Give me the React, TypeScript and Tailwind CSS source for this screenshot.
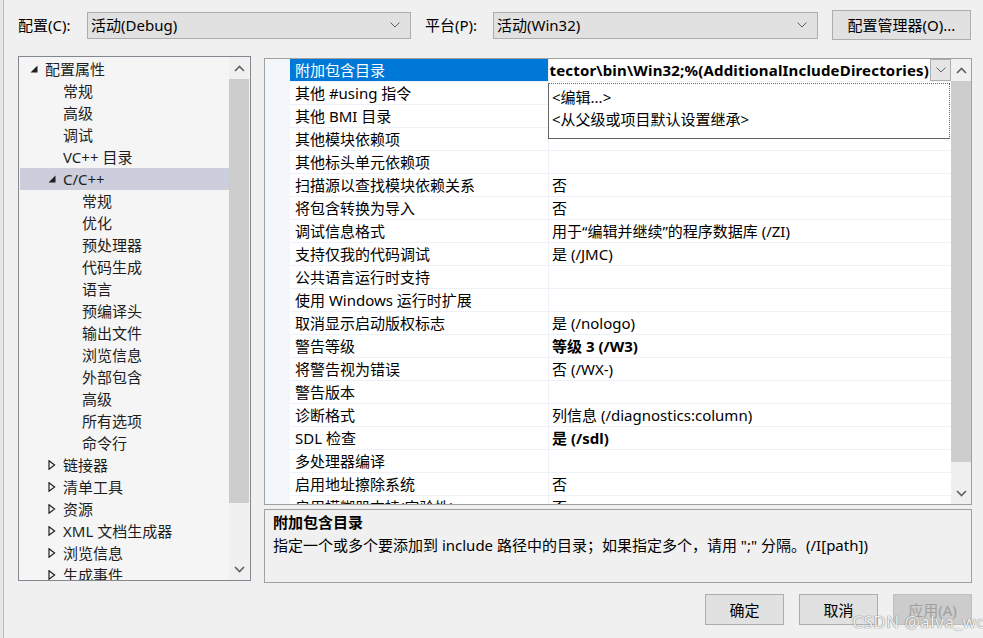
import React from 'react';

type TreeItem = { label: string; level: 0 | 1 | 2; expander?: 'open' | 'closed'; selected?: boolean };

const treeItems: TreeItem[] = [
  { label: '配置属性', level: 0, expander: 'open' },
  { label: '常规', level: 1 },
  { label: '高级', level: 1 },
  { label: '调试', level: 1 },
  { label: 'VC++ 目录', level: 1 },
  { label: 'C/C++', level: 1, expander: 'open', selected: true },
  { label: '常规', level: 2 },
  { label: '优化', level: 2 },
  { label: '预处理器', level: 2 },
  { label: '代码生成', level: 2 },
  { label: '语言', level: 2 },
  { label: '预编译头', level: 2 },
  { label: '输出文件', level: 2 },
  { label: '浏览信息', level: 2 },
  { label: '外部包含', level: 2 },
  { label: '高级', level: 2 },
  { label: '所有选项', level: 2 },
  { label: '命令行', level: 2 },
  { label: '链接器', level: 1, expander: 'closed' },
  { label: '清单工具', level: 1, expander: 'closed' },
  { label: '资源', level: 1, expander: 'closed' },
  { label: 'XML 文档生成器', level: 1, expander: 'closed' },
  { label: '浏览信息', level: 1, expander: 'closed' },
  { label: '生成事件', level: 1, expander: 'closed' },
];

type Prop = { name: string; value?: string; bold?: boolean };

const props: Prop[] = [
  { name: '附加包含目录' },
  { name: '其他 #using 指令' },
  { name: '其他 BMI 目录' },
  { name: '其他模块依赖项' },
  { name: '其他标头单元依赖项' },
  { name: '扫描源以查找模块依赖关系', value: '否' },
  { name: '将包含转换为导入', value: '否' },
  { name: '调试信息格式', value: '用于“编辑并继续”的程序数据库 (/ZI)' },
  { name: '支持仅我的代码调试', value: '是 (/JMC)' },
  { name: '公共语言运行时支持' },
  { name: '使用 Windows 运行时扩展' },
  { name: '取消显示启动版权标志', value: '是 (/nologo)' },
  { name: '警告等级', value: '等级 3 (/W3)', bold: true },
  { name: '将警告视为错误', value: '否 (/WX-)' },
  { name: '警告版本' },
  { name: '诊断格式', value: '列信息 (/diagnostics:column)' },
  { name: 'SDL 检查', value: '是 (/sdl)', bold: true },
  { name: '多处理器编译' },
  { name: '启用地址擦除系统', value: '否' },
  { name: '启用模糊器支持(实验性)', value: '否' },
];

const levelPad = { 0: 'pl-[10px]', 1: 'pl-[28px]', 2: 'pl-[47px]' };

function ChevronDown({ className = '' }: { className?: string }) {
  return (
    <svg width="10" height="6" viewBox="0 0 10 6" className={className}>
      <polyline points="0.5,0.5 5,5 9.5,0.5" fill="none" stroke="#606060" strokeWidth="1" />
    </svg>
  );
}

function ScrollArrow({ dir }: { dir: 'up' | 'down' }) {
  return (
    <svg width="11" height="7" viewBox="0 0 11 7">
      <polyline
        points={dir === 'up' ? '1,6 5.5,1.5 10,6' : '1,1 5.5,5.5 10,1'}
        fill="none"
        stroke="#606060"
        strokeWidth="1.6"
      />
    </svg>
  );
}

function Expander({ kind }: { kind?: 'open' | 'closed' }) {
  return (
    <span className="flex w-[15px] shrink-0 items-center">
      {kind === 'open' && (
        <svg width="8" height="8" viewBox="0 0 8 8">
          <polygon points="7.5,0.5 7.5,7.5 0.5,7.5" fill="#1e1e1e" />
        </svg>
      )}
      {kind === 'closed' && (
        <svg width="8" height="10" viewBox="0 0 8 10">
          <polygon points="1,0.8 6.6,5 1,9.2" fill="none" stroke="#1e1e1e" strokeWidth="1.2" />
        </svg>
      )}
    </span>
  );
}

function Combo({ text, className }: { text: string; className: string }) {
  return (
    <div className={`flex h-[27px] items-center justify-between border border-[#adadad] bg-[#e1e1e1] pl-[3px] pr-[10px] ${className}`}>
      <span>{text}</span>
      <ChevronDown />
    </div>
  );
}

function Button({ text, disabled }: { text: string; disabled?: boolean }) {
  return (
    <div
      className={`flex h-[31px] w-[79px] items-center justify-center border ${
        disabled ? 'border-[#bfbfbf] bg-[#cccccc] text-[#a0a0a0]' : 'border-[#adadad] bg-[#e1e1e1] text-black'
      }`}
    >
      {text}
    </div>
  );
}

export default function App() {
  return (
    <div
      className="relative flex h-[638px] w-[983px] overflow-hidden bg-[#f0f0f0] text-[15px] leading-[20px] text-black"
      style={{ fontFamily: '"Segoe UI", "Noto Sans", "Noto Sans CJK SC", sans-serif' }}
    >
      <div className="h-full w-[4px] shrink-0 border-r border-[#b9b9b9] bg-[#e6e6e6]" />

      <div className="flex flex-1 flex-col pl-[14px] pr-[11px]">
        {/* top selectors */}
        <div className="mt-[10px] flex h-[30px] items-center">
          <span className="w-[69px]">配置(C):</span>
          <Combo text="活动(Debug)" className="w-[324px]" />
          <span className="ml-[14px] w-[68px]">平台(P):</span>
          <Combo text="活动(Win32)" className="w-[325px]" />
          <div className="ml-[14px] flex h-[30px] w-[139px] items-center justify-center border border-[#adadad] bg-[#e1e1e1]">
            配置管理器(O)...
          </div>
        </div>

        <div className="mt-[16px] flex">
          {/* tree */}
          <div className="flex h-[525px] w-[233px] border border-[#828790] bg-[#f5f5f5]">
            <div className="flex-1 overflow-hidden pl-px pt-px">
              {treeItems.map((it, i) => (
                <div
                  key={i}
                  className={`flex h-[22px] items-center whitespace-nowrap ${levelPad[it.level]} ${
                    it.selected ? 'bg-[#cccedb]' : ''
                  }`}
                >
                  <Expander kind={it.expander} />
                  <span className="text-[#1e1e1e]">{it.label}</span>
                </div>
              ))}
            </div>
            <div className="mr-px flex w-[20px] flex-col bg-[#f0f0f0]">
              <div className="flex h-[22px] items-center justify-center">
                <ScrollArrow dir="up" />
              </div>
              <div className="h-[424px] bg-[#cdcdcd]" />
              <div className="flex-1" />
              <div className="flex h-[22px] items-center justify-center">
                <ScrollArrow dir="down" />
              </div>
            </div>
          </div>

          {/* right side */}
          <div className="ml-[13px] mt-[2px] flex flex-1 flex-col">
            <div className="relative flex h-[447px] border border-[#a0a0a0] bg-white">
              <div className="w-[25px] shrink-0 bg-[#f3f6fb]" />
              <div className="flex-1 overflow-hidden">
                {props.map((p, i) =>
                  i === 0 ? (
                    <div key={i} className="flex h-[23px] border-b border-[#eef2f8]">
                      <div className="flex w-[258px] shrink-0 items-center bg-[#0078d7] pl-[5px] text-white">
                        {p.name}
                      </div>
                      <div className="flex flex-1 items-center border-l border-[#eef2f8]">
                        <div className="flex flex-1 justify-end overflow-hidden whitespace-nowrap pr-px font-bold tracking-[0.17px]">
                          <span>tector\bin\Win32;%(AdditionalIncludeDirectories)</span>
                        </div>
                        <div className="flex h-[22px] w-[21px] shrink-0 items-center justify-center border border-[#adadad] bg-[#e5e5e5]">
                          <ChevronDown />
                        </div>
                      </div>
                    </div>
                  ) : (
                    <div key={i} className="flex h-[23px] border-b border-[#eef2f8]">
                      <div className="flex w-[258px] shrink-0 items-center whitespace-nowrap pl-[5px]">{p.name}</div>
                      <div
                        className={`flex flex-1 items-center whitespace-nowrap border-l border-[#eef2f8] pl-[3px] ${
                          p.bold ? 'font-bold' : ''
                        }`}
                      >
                        {p.value}
                      </div>
                    </div>
                  )
                )}
              </div>
              <div className="flex w-[20px] shrink-0 flex-col bg-[#f0f0f0]">
                <div className="flex h-[22px] items-center justify-center">
                  <ScrollArrow dir="up" />
                </div>
                <div className="h-[381px] bg-[#cdcdcd]" />
                <div className="flex-1" />
                <div className="flex h-[22px] items-center justify-center">
                  <ScrollArrow dir="down" />
                </div>
              </div>

              {/* open dropdown list */}
              <div className="absolute left-[283px] top-[24px] h-[56px] w-[402px] border border-[#646464] bg-white pl-[3px] pt-[2px] [border-right-style:dotted] [border-top-style:dotted]">
                <div className="flex h-[22px] items-center">&lt;编辑...&gt;</div>
                <div className="flex h-[22px] items-center">&lt;从父级或项目默认设置继承&gt;</div>
              </div>
            </div>

            <div className="mt-[4px] h-[74px] border border-[#a0a0a0] bg-[#f0f0f0] pl-[8px]">
              <div className="flex h-[23px] items-center font-bold">附加包含目录</div>
              <div className="flex h-[24px] items-center whitespace-nowrap">
                指定一个或多个要添加到 include 路径中的目录；如果指定多个，请用 ";" 分隔。(/I[path])
              </div>
            </div>
          </div>
        </div>

        <div className="mt-[11px] flex justify-end gap-[15px]">
          <Button text="确定" />
          <Button text="取消" />
          <Button text="应用(A)" disabled />
        </div>
      </div>

      <div className="pointer-events-none absolute bottom-[6px] right-[-2px] text-[17px] tracking-[0.5px] text-white/90 [text-shadow:0_0_1px_#777,0_0_1px_#777]">
        CSDN @alva_wc
      </div>
    </div>
  );
}
